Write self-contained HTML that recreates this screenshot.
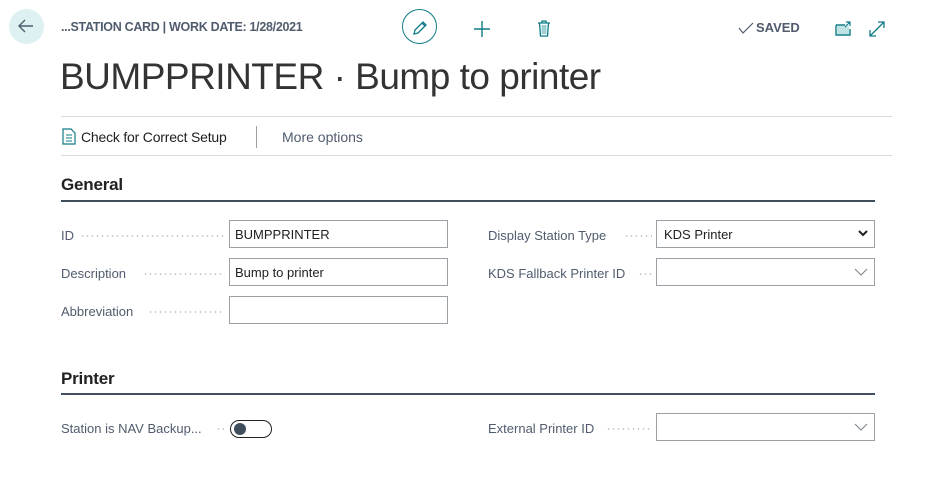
<!DOCTYPE html>
<html><head><style>
body{margin:0;width:930px;height:478px;background:#fff;font-family:"Liberation Sans",sans-serif;position:relative;overflow:hidden;color:#212121}
.a{position:absolute}
.lbl{position:absolute;font-size:13px;color:#505C6D;line-height:16px;white-space:nowrap}
.dots{position:absolute;height:2px;background-image:radial-gradient(circle,#b8bec6 0.7px,transparent 0.9px);background-size:5px 2px;background-repeat:repeat-x}
.inp{position:absolute;border:1px solid #9aa0a6;box-sizing:border-box;height:28px;font-size:13px;line-height:28px;padding-left:5px;color:#212121;background:#fff}
.h{position:absolute;font-size:17px;font-weight:bold;color:#212121;letter-spacing:-.2px}
.hl{position:absolute;height:2px;background:#3F4D5C}
</style></head><body>
<div class="a" style="left:9px;top:9px;width:35px;height:35px;border-radius:50%;background:#DDF0F2"></div>
<svg class="a" style="left:16px;top:16px" width="20" height="20"><path d="M17 10H3M9 4L3 10l6 6" stroke="#505C6D" stroke-width="1.4" fill="none"/></svg>
<div class="a" style="left:61px;top:20px;font-size:12.5px;font-weight:bold;color:#505C6D;letter-spacing:-.3px">...STATION CARD | WORK DATE: 1/28/2021</div>
<div class="a" style="left:402px;top:9px;width:35px;height:35px;border-radius:50%;border:1.5px solid #0E7C86;box-sizing:border-box"></div>
<svg class="a" style="left:410px;top:18px" width="20" height="20"><path d="M4 16l1-4 8-8 3 3-8 8z M12 5l3 3" stroke="#0E7C86" stroke-width="1.3" fill="none"/></svg>
<svg class="a" style="left:473px;top:20px" width="18" height="18"><path d="M9 1v16M1 9h16" stroke="#0E7C86" stroke-width="1.4"/></svg>
<svg class="a" style="left:536px;top:19px" width="16" height="18"><path d="M2 4h12M6 4V2h4v2M3.5 4l1 13h7l1-13" stroke="#0E7C86" stroke-width="1.3" fill="none"/><rect x="5.5" y="6" width="5" height="9" fill="#9fd0d4"/></svg>
<svg class="a" style="left:738px;top:22px" width="16" height="12"><path d="M1 6l4 5 10-10" stroke="#505C6D" stroke-width="1.2" fill="none"/></svg>
<div class="a" style="left:756px;top:20px;font-size:13px;font-weight:bold;color:#505C6D">SAVED</div>
<svg class="a" style="left:835px;top:21px" width="18" height="15"><path d="M1 4h9M1 4v10h14V8" stroke="#0E7C86" stroke-width="1.4" fill="none"/><rect x="2" y="5" width="12" height="8" fill="#bfe2e5"/><path d="M10 6l5-5M11 1h4v4" stroke="#0E7C86" stroke-width="1.2" fill="none"/></svg>
<svg class="a" style="left:868px;top:20px" width="18" height="18"><path d="M2 16L16 2M2 10v6h6M10 2h6v6" stroke="#0E7C86" stroke-width="1.3" fill="none"/></svg>
<div class="a" style="left:60px;top:55px;font-size:37px;font-weight:300;color:#333;letter-spacing:-.5px;line-height:44px">BUMPPRINTER · Bump to printer</div>
<div class="a" style="left:61px;top:116px;width:831px;height:1px;background:#d8dadd"></div>
<svg class="a" style="left:62px;top:128px" width="14" height="17"><path d="M1 1h8l4 4v11H1z" stroke="#0E7C86" stroke-width="1.2" fill="none"/><path d="M4 7h6M4 10h6M4 13h6" stroke="#0E7C86" stroke-width="1"/></svg>
<div class="a" style="left:81px;top:129px;font-size:14px;color:#212121;letter-spacing:-.2px">Check for Correct Setup</div>
<div class="a" style="left:256px;top:126px;width:1px;height:22px;background:#9aa0a6"></div>
<div class="a" style="left:282px;top:129px;font-size:14px;color:#505C6D">More options</div>
<div class="a" style="left:61px;top:155px;width:831px;height:1px;background:#d8dadd"></div>

<div class="h" style="left:61px;top:175px">General</div>
<div class="hl" style="left:61px;top:200px;width:814px"></div>

<div class="lbl" style="left:61px;top:228px">ID</div><div class="dots" style="left:80px;top:235px;width:145px"></div>
<div class="inp" style="left:229px;top:220px;width:219px">BUMPPRINTER</div>
<div class="lbl" style="left:61px;top:266px">Description</div><div class="dots" style="left:143px;top:273px;width:82px"></div>
<div class="inp" style="left:229px;top:258px;width:219px">Bump to printer</div>
<div class="lbl" style="left:61px;top:304px">Abbreviation</div><div class="dots" style="left:148px;top:311px;width:77px"></div>
<div class="inp" style="left:229px;top:296px;width:219px"></div>

<div class="lbl" style="left:488px;top:228px">Display Station Type</div><div class="dots" style="left:624px;top:235px;width:28px"></div>
<div class="inp" style="left:656px;top:220px;width:219px;padding-left:7px">KDS Printer</div>
<svg class="a" style="left:858px;top:230px" width="10" height="8"><path d="M1 1l4 4 4-4" stroke="#212121" stroke-width="2" fill="none"/></svg>
<div class="lbl" style="left:488px;top:266px">KDS Fallback Printer ID</div><div class="dots" style="left:638px;top:273px;width:14px"></div>
<div class="inp" style="left:656px;top:258px;width:219px"></div>
<svg class="a" style="left:854px;top:268px" width="14" height="8"><path d="M1 1l6 6 6-6" stroke="#7a8089" stroke-width="1" fill="none"/></svg>

<div class="h" style="left:61px;top:369px">Printer</div>
<div class="hl" style="left:61px;top:393px;width:814px;height:1.5px"></div>

<div class="lbl" style="left:61px;top:421px">Station is NAV Backup...</div><div class="dots" style="left:216px;top:428px;width:8px"></div>
<div class="a" style="left:230px;top:420px;width:42px;height:18px;border:1.5px solid #212121;border-radius:10px;box-sizing:border-box"></div>
<div class="a" style="left:234px;top:423px;width:12px;height:12px;border-radius:50%;background:#3F4D5C"></div>
<div class="lbl" style="left:488px;top:421px">External Printer ID</div><div class="dots" style="left:606px;top:428px;width:46px"></div>
<div class="inp" style="left:656px;top:413px;width:219px"></div>
<svg class="a" style="left:854px;top:423px" width="14" height="8"><path d="M1 1l6 6 6-6" stroke="#7a8089" stroke-width="1" fill="none"/></svg>
</body></html>
